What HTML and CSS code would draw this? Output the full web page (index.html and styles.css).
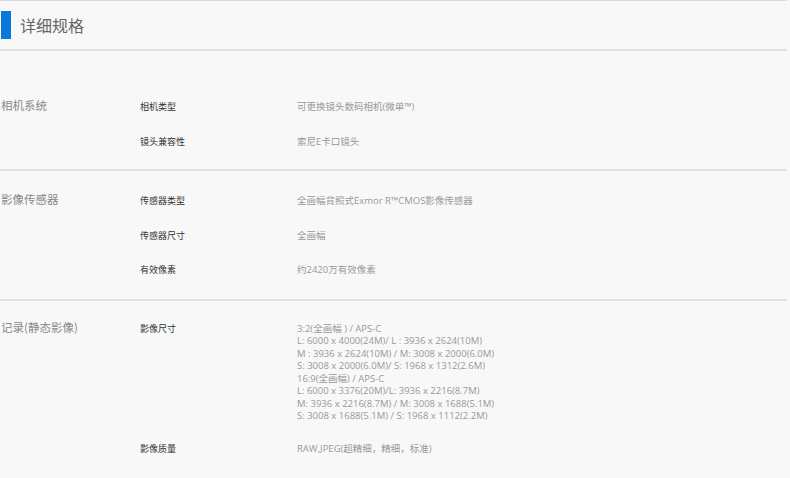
FILE: index.html
```html
<!DOCTYPE html>
<html lang="zh-CN">
<head>
  <meta charset="UTF-8" />
  <title>详细规格</title>
  <link rel="stylesheet" href="styles.css">
</head>
<body>

  <div class="specs">
    <!-- Cabeçalho -->
    <div class="specs-header">
      <span class="marca"></span>
      <h2>详细规格</h2>
    </div>

    <div class="grupo grupo-primeiro">
      <div class="categoria">相机系统</div>
      <div class="linhas">
        <div class="linha"><div class="rotulo">相机类型</div><div class="valor">可更换镜头数码相机(微单™)</div></div>
        <div class="linha"><div class="rotulo">镜头兼容性</div><div class="valor">索尼E卡口镜头</div></div>
      </div>
    </div>

    <div class="grupo">
      <div class="categoria">影像传感器</div>
      <div class="linhas">
        <div class="linha"><div class="rotulo">传感器类型</div><div class="valor">全画幅背照式Exmor R™CMOS影像传感器</div></div>
        <div class="linha"><div class="rotulo">传感器尺寸</div><div class="valor">全画幅</div></div>
        <div class="linha"><div class="rotulo">有效像素</div><div class="valor">约2420万有效像素</div></div>
      </div>
    </div>

    <div class="grupo grupo-ultimo">
      <div class="categoria">记录(静态影像)</div>
      <div class="linhas">
        <div class="linha linha-longa">
          <div class="rotulo">影像尺寸</div>
          <div class="valor">
            3:2(全画幅 ) / APS-C<br>
            L: 6000 x 4000(24M)/ L : 3936 x 2624(10M)<br>
            M : 3936 x 2624(10M) / M: 3008 x 2000(6.0M)<br>
            S: 3008 x 2000(6.0M)/ S: 1968 x 1312(2.6M)<br>
            16:9(全画幅) / APS-C<br>
            L: 6000 x 3376(20M)/L: 3936 x 2216(8.7M)<br>
            M: 3936 x 2216(8.7M) / M: 3008 x 1688(5.1M)<br>
            S: 3008 x 1688(5.1M) / S: 1968 x 1112(2.2M)
          </div>
        </div>
        <div class="linha"><div class="rotulo">影像质量</div><div class="valor">RAW,JPEG(超精细，精细，标准)</div></div>
      </div>
    </div>
  </div>

</body>
</html>
```

FILE: styles.css
```css
body {
  margin: 0;
  background-color: #f8f8f8;
  font-family: "Open Sans", "Noto Sans CJK SC", sans-serif;
  color: #999;
}

.specs {
  width: 787px;
}

.specs-header {
  display: flex;
  align-items: center;
  gap: 9px;
  height: 51px;
  padding-left: 1px;
  border-top: 1px solid #dcdcdc;
  border-bottom: 2px solid #dfdfdf;
  box-sizing: border-box;
}

.marca {
  width: 10px;
  height: 28px;
  background-color: #0a78d8;
}

.specs-header h2 {
  margin: 0;
  font-family: "Noto Sans CJK SC", sans-serif;
  font-size: 16px;
  font-weight: normal;
  color: #666;
}

.grupo {
  display: flex;
  padding: 13px 0 11px 1px;
  border-bottom: 2px solid #e2e2e2;
}

.grupo-primeiro {
  padding-top: 39px;
  padding-bottom: 10px;
}

.grupo-ultimo {
  border-bottom: none;
  padding-top: 11px;
}

.categoria {
  width: 139px;
  padding-top: 6px;
  font-family: "Noto Sans CJK SC", sans-serif;
  font-size: 11.5px;
  line-height: 18px;
  color: #888;
}

.linha {
  display: flex;
  padding: 11px 0;
  line-height: 12.5px;
}

.linha-longa {
  padding-bottom: 9px;
}

.rotulo {
  width: 157px;
  font-family: "Noto Sans CJK SC", sans-serif;
  font-size: 9px;
  color: #333;
}

.valor {
  font-size: 9.5px;
  color: #999;
}
```
